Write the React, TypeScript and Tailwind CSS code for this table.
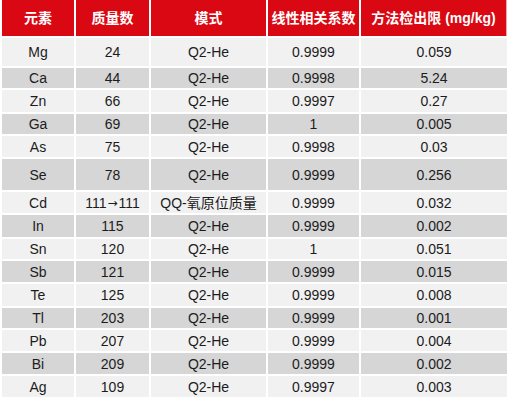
const HEAD = ['元素', '质量数', '模式', '线性相关系数', '方法检出限 (mg/kg)'];

// [element, mass, mode, r, LOD, row height]
const ROWS: [string, string, string, string, string, string][] = [
  ['Mg', '24', 'Q2-He', '0.9999', '0.059', 'h-[28px]'],
  ['Ca', '44', 'Q2-He', '0.9998', '5.24', 'h-[20px]'],
  ['Zn', '66', 'Q2-He', '0.9997', '0.27', 'h-[22px]'],
  ['Ga', '69', 'Q2-He', '1', '0.005', 'h-[20px]'],
  ['As', '75', 'Q2-He', '0.9998', '0.03', 'h-[21px]'],
  ['Se', '78', 'Q2-He', '0.9999', '0.256', 'h-[31px]'],
  ['Cd', '111→111', 'QQ-氧原位质量', '0.9999', '0.032', 'h-[21px]'],
  ['In', '115', 'Q2-He', '0.9999', '0.002', 'h-[22px]'],
  ['Sn', '120', 'Q2-He', '1', '0.051', 'h-[20px]'],
  ['Sb', '121', 'Q2-He', '0.9999', '0.015', 'h-[21px]'],
  ['Te', '125', 'Q2-He', '0.9999', '0.008', 'h-[22px]'],
  ['Tl', '203', 'Q2-He', '0.9999', '0.001', 'h-[20px]'],
  ['Pb', '207', 'Q2-He', '0.9999', '0.004', 'h-[21px]'],
  ['Bi', '209', 'Q2-He', '0.9999', '0.002', 'h-[21px]'],
  ['Ag', '109', 'Q2-He', '0.9997', '0.003', 'h-[21px]'],
];

function Cell({ text }: { text: string }) {
  // the arrow glyph is missing from Liberation Sans; take DejaVu's so it sits mid-line
  if (!text.includes('→')) return <>{text}</>;
  const [a, b] = text.split('→');
  return (
    <>
      {a}
      <span className="font-['DejaVu_Sans'] text-[12px] px-[1px]">→</span>
      {b}
    </>
  );
}

export default function App() {
  return (
    <div className="w-[510px] h-[399px] bg-white pl-[2px] overflow-hidden font-['Liberation_Sans','Noto_Sans_CJK_SC',sans-serif]">
      <div className="grid grid-cols-[72px_73px_115px_91px_146px] gap-[2px]">
        {/* ── Header ─────────────────────────────────────────── */}
        {HEAD.map((h, i) => (
          <div
            key={h}
            className={
              'h-[36px] flex items-center justify-center bg-[#da0812] text-white font-bold text-[14px] ' +
              (i === 4 ? 'border-r border-[#f3a4a8]' : '')
            }
          >
            {h}
          </div>
        ))}

        {/* ── Body rows ──────────────────────────────────────── */}
        {ROWS.map((r, ri) =>
          r.slice(0, 5).map((c, ci) => (
            <div
              key={ri + '-' + ci}
              className={
                r[5] +
                ' flex items-center justify-center text-[14px] leading-none text-[#1c1c1c] whitespace-nowrap ' +
                (ri % 2 === 0 ? 'bg-[#f1f1f1]' : 'bg-[#d6d6d6]')
              }
            >
              <Cell text={c} />
            </div>
          ))
        )}
      </div>
    </div>
  );
}
